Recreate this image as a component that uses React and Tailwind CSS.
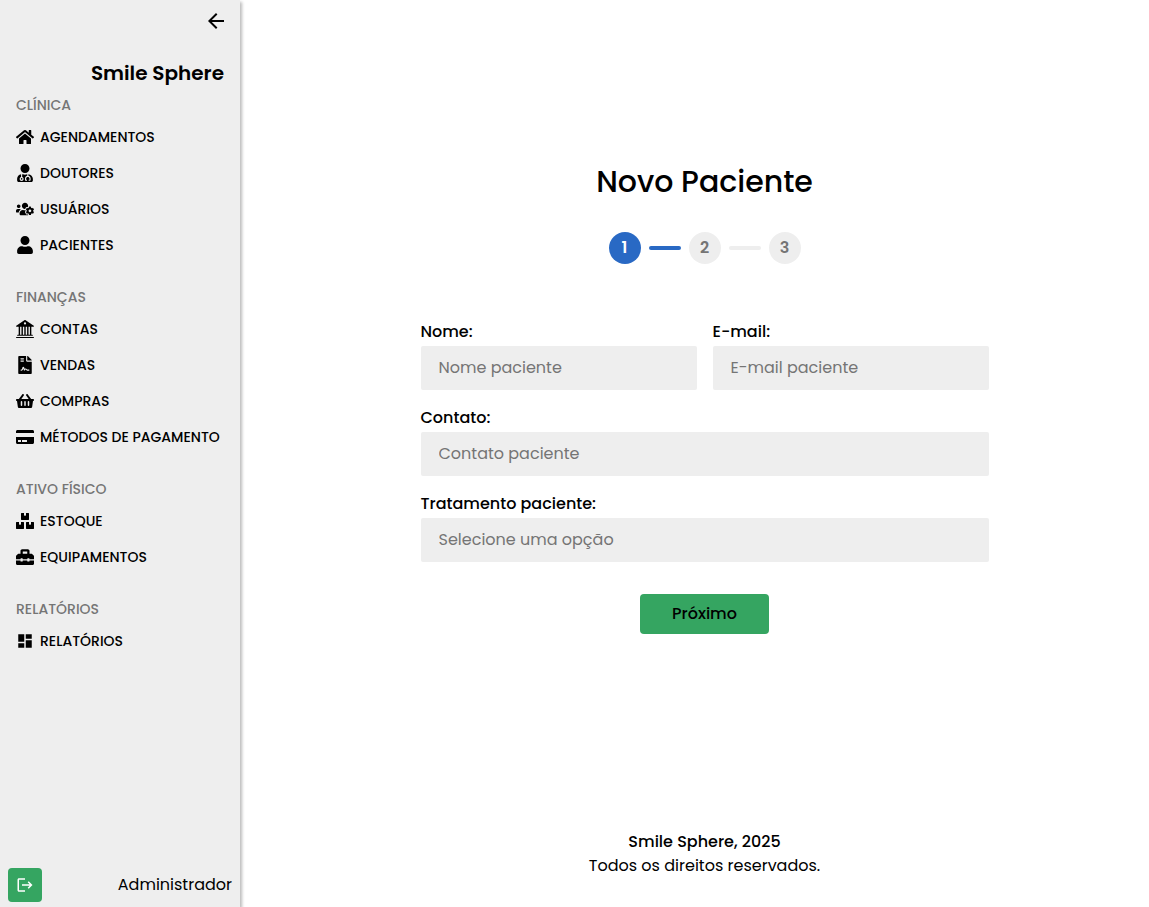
import {
  FaHome,
  FaUserMd,
  FaUsersCog,
  FaUser,
  FaFileContract,
  FaShoppingBasket,
  FaCreditCard,
  FaBoxes,
  FaToolbox,
} from "react-icons/fa";
import { BsBank2 } from "react-icons/bs";
import { MdArrowBack, MdDashboard, MdLogout } from "react-icons/md";

const sections = [
  {
    title: "CLÍNICA",
    items: [
      { label: "AGENDAMENTOS", icon: FaHome },
      { label: "DOUTORES", icon: FaUserMd },
      { label: "USUÁRIOS", icon: FaUsersCog },
      { label: "PACIENTES", icon: FaUser },
    ],
  },
  {
    title: "FINANÇAS",
    items: [
      { label: "CONTAS", icon: BsBank2 },
      { label: "VENDAS", icon: FaFileContract },
      { label: "COMPRAS", icon: FaShoppingBasket },
      { label: "MÉTODOS DE PAGAMENTO", icon: FaCreditCard },
    ],
  },
  {
    title: "ATIVO FÍSICO",
    items: [
      { label: "ESTOQUE", icon: FaBoxes },
      { label: "EQUIPAMENTOS", icon: FaToolbox },
    ],
  },
  {
    title: "RELATÓRIOS",
    items: [{ label: "RELATÓRIOS", icon: MdDashboard }],
  },
];

function Sidebar() {
  return (
    <aside className="flex w-60 shrink-0 flex-col bg-[#eee] shadow-[2px_2px_3px_#bbb]">
      <div className="flex justify-end px-3 pt-[9px]">
        <button type="button" aria-label="Recolher menu">
          <MdArrowBack size={24} />
        </button>
      </div>
      <p className="mt-[26px] px-4 text-right text-xl font-semibold">Smile Sphere</p>
      <nav className="mt-1 flex flex-col gap-5 px-4 text-sm font-medium">
        {sections.map((section) => (
          <section key={section.title}>
            <h2 className="leading-7 text-[#757575]">{section.title}</h2>
            <ul>
              {section.items.map(({ label, icon: Icon }) => (
                <li key={label}>
                  <a href="#" className="flex h-9 items-center gap-1.5 whitespace-nowrap">
                    <Icon size={18} className="shrink-0" />
                    {label}
                  </a>
                </li>
              ))}
            </ul>
          </section>
        ))}
      </nav>
      <div className="mt-auto flex items-center justify-between px-2 pb-[5px]">
        <button type="button" aria-label="Sair" className="rounded-sm bg-[#35a561] p-2 text-white">
          <MdLogout size={18} />
        </button>
        <span>Administrador</span>
      </div>
    </aside>
  );
}

function Step({ number, active }) {
  return (
    <li
      className={
        active
          ? "flex size-8 items-center justify-center rounded-full bg-[#2969c4] font-semibold text-white"
          : "flex size-8 items-center justify-center rounded-full bg-[#eee] font-semibold text-[#757575]"
      }
    >
      {number}
    </li>
  );
}

function Field({ id, label, placeholder, type = "text" }) {
  return (
    <div className="flex min-w-0 flex-1 flex-col gap-0.5">
      <label htmlFor={id} className="font-medium">
        {label}
      </label>
      <input
        id={id}
        type={type}
        placeholder={placeholder}
        className="h-11 w-full rounded-xs bg-[#eee] px-[18px] placeholder:text-[#757575]"
      />
    </div>
  );
}

export default function App() {
  return (
    <div className="flex min-h-screen bg-white font-[Poppins,Inter,sans-serif] text-black">
      <Sidebar />
      <div className="flex min-w-0 flex-1 flex-col pl-5">
        <main className="mx-auto flex w-full max-w-150 flex-1 flex-col items-center justify-center px-4 pt-4 pb-[53px]">
          <h1 className="text-3xl leading-11 font-medium">Novo Paciente</h1>
          <ol className="mt-7 flex items-center gap-2">
            <Step number={1} active />
            <li aria-hidden="true" className="h-1 w-8 rounded-full bg-[#2969c4]" />
            <Step number={2} />
            <li aria-hidden="true" className="h-1 w-8 rounded-full bg-[#eee]" />
            <Step number={3} />
          </ol>
          <form className="mt-14 flex w-full flex-col gap-4">
            <div className="flex gap-4">
              <Field id="nome" label="Nome:" placeholder="Nome paciente" />
              <Field id="email" label="E-mail:" placeholder="E-mail paciente" type="email" />
            </div>
            <Field id="contato" label="Contato:" placeholder="Contato paciente" type="tel" />
            <div className="flex flex-col gap-0.5">
              <label htmlFor="tratamento" className="font-medium">
                Tratamento paciente:
              </label>
              <select
                id="tratamento"
                defaultValue=""
                className="h-11 w-full appearance-none rounded-xs bg-[#eee] px-[18px] text-[#757575]"
              >
                <option value="">Selecione uma opção</option>
              </select>
            </div>
            <button
              type="button"
              className="mt-4 h-10 self-center rounded-sm bg-[#35a561] px-8 font-medium"
            >
              Próximo
            </button>
          </form>
        </main>
        <footer className="pb-[29px] text-center">
          <p className="font-medium">Smile Sphere, 2025</p>
          <p>Todos os direitos reservados.</p>
        </footer>
      </div>
    </div>
  );
}
